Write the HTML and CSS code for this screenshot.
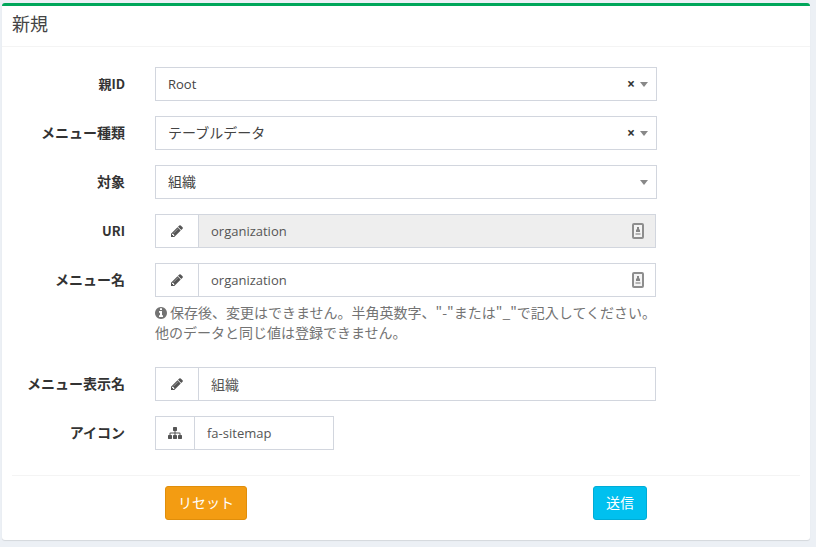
FILE: index.html
```html
<!DOCTYPE html>
<html lang="ja">
<head>
<meta charset="utf-8">
<meta name="viewport" content="width=device-width, initial-scale=1">
<title>新規</title>
<link rel="stylesheet" href="styles.css">
</head>
<body>
<svg class="sprite" aria-hidden="true">
  <symbol id="pencil" viewBox="0 0 1536 1792"><path d="M363 1536l91-91-235-235-91 91v107h128v128h107zM886 620q0-12-12-12-10 0-14 4l-545 545q-5 5-5 14 0 12 12 12 10 0 14-4l545-545q5-5 5-14zM832 416l416 416-832 832H0v-416zM1515 512q0 53-37 90l-166 166-416-416 166-165q36-38 90-38 53 0 91 38l235 234q37 39 37 91z"/></symbol>
  <symbol id="sitemap" viewBox="0 0 1792 1792"><path d="M1792 1248v320q0 40-28 68t-68 28h-320q-40 0-68-28t-28-68v-320q0-40 28-68t68-28h96V960H960v192h96q40 0 68 28t28 68v320q0 40-28 68t-68 28H736q-40 0-68-28t-28-68v-320q0-40 28-68t68-28h96V960H320v192h96q40 0 68 28t28 68v320q0 40-28 68t-68 28H96q-40 0-68-28t-28-68v-320q0-40 28-68t68-28h96V960q0-52 38-90t90-38h512V640h-96q-40 0-68-28t-28-68V224q0-40 28-68t68-28h320q40 0 68 28t28 68v320q0 40-28 68t-68 28h-96v192h512q52 0 90 38t38 90v192h96q40 0 68 28t28 68z"/></symbol>
  <symbol id="info" viewBox="0 0 1536 1792"><path d="M1024 1376v-160q0-14-9-23t-23-9h-96V672q0-14-9-23t-23-9H544q-14 0-23 9t-9 23v160q0 14 9 23t23 9h96v320h-96q-14 0-23 9t-9 23v160q0 14 9 23t23 9h448q14 0 23-9t9-23zM896 480V320q0-14-9-23t-23-9H672q-14 0-23 9t-9 23v160q0 14 9 23t23 9h192q14 0 23-9t9-23zM1536 896q0 209-103 385.500T1153.500 1561 768 1664t-385.500-103T103 1281.500 0 896t103-385.500T382.500 231 768 128t385.500 103T1433 510.500 1536 896z"/></symbol>
  <symbol id="autofill" viewBox="0 0 12 16"><rect x="1" y="1" width="10" height="14" rx="1" fill="#f4f4f4" stroke="#8e8e8e" stroke-width="2"/><path d="M5 4h2v2l1 1v2H4V7l1-1z" fill="#868686"/><path d="M3.500 10h5v2h-5z" fill="#b4b4b4"/></symbol>
</svg>
<main class="box">
  <header class="box-header"><h1>新規</h1></header>
  <form>
    <div class="fields">
      <div class="row">
        <label class="latin" for="parent">親ID</label>
        <div class="select"><select id="parent"><option>Root</option></select><button class="clear" type="button" aria-label="クリア">×</button></div>
      </div>
      <div class="row">
        <label for="type">メニュー種類</label>
        <div class="select"><select id="type"><option>テーブルデータ</option></select><button class="clear" type="button" aria-label="クリア">×</button></div>
      </div>
      <div class="row">
        <label for="target">対象</label>
        <div class="select"><select id="target"><option>組織</option></select></div>
      </div>
      <div class="row">
        <label class="latin" for="uri">URI</label>
        <div class="group"><span class="addon"><svg class="icon pencil"><use href="#pencil"/></svg></span><input id="uri" type="text" value="organization" readonly><svg class="autofill"><use href="#autofill"/></svg></div>
      </div>
      <div class="row">
        <label for="name">メニュー名</label>
        <div>
          <div class="group"><span class="addon"><svg class="icon pencil"><use href="#pencil"/></svg></span><input id="name" type="text" value="organization" aria-describedby="name-help"><svg class="autofill"><use href="#autofill"/></svg></div>
          <p class="help" id="name-help"><svg class="icon info"><use href="#info"/></svg>保存後、変更はできません。半角英数字、"-"または"_"で記入してください。<br>他のデータと同じ値は登録できません。</p>
        </div>
      </div>
      <div class="row">
        <label for="display">メニュー表示名</label>
        <div class="group"><span class="addon"><svg class="icon pencil"><use href="#pencil"/></svg></span><input id="display" type="text" value="組織"></div>
      </div>
      <div class="row">
        <label for="icon">アイコン</label>
        <div class="group short"><span class="addon"><svg class="icon"><use href="#sitemap"/></svg></span><input id="icon" type="text" value="fa-sitemap"></div>
      </div>
    </div>
    <footer class="box-footer">
      <div class="actions">
        <button class="btn warning" type="reset">リセット</button>
        <button class="btn primary" type="submit">送信</button>
      </div>
    </footer>
  </form>
</main>
</body>
</html>
```
FILE: styles.css
```css
* { box-sizing: border-box; }
body {
  margin: 0;
  padding: 3px 6px 6px 2px;
  background: #ecf0f5;
  color: #333;
  font: 14px/20px "Open Sans", "Noto Sans CJK JP", sans-serif;
}
.sprite { display: none; }
.box {
  background: #fff;
  border-top: 3px solid #00a65a;
  border-radius: 3px;
  box-shadow: 0 1px 1px rgba(0, 0, 0, .1);
}
.box-header {
  padding: 8px 10px 12px;
  border-bottom: 1px solid #f4f4f4;
}
h1 {
  margin: 0;
  color: #444;
  font-size: 18px;
  font-weight: 400;
  line-height: 20px;
}
.fields {
  display: grid;
  gap: 15px;
  padding: 20px 5px 25px;
}
.row, .actions {
  display: grid;
  grid-template-columns: 2fr 8fr 2fr;
}
.row > * { min-width: 0; margin: 0 15px; }
.row > label {
  padding-top: 7px;
  text-align: right;
  font-weight: 700;
  font-size: 14px;
  white-space: nowrap;
}
.row > .latin { font-family: "Noto Sans CJK JP", sans-serif; font-size: 13px; }
input, select, button { font: inherit; }
input, select { font-size: 13px; }
#type, #target, #display { font-size: 14px; }
#display { font-family: "Noto Sans CJK JP", sans-serif; }
select, input {
  width: 100%;
  height: 34px;
  padding: 0 12px;
  border: 1px solid #d2d6de;
  border-radius: 0;
  background: #fff;
  color: #444;
  appearance: none;
}
input { color: #555; }
input[readonly] { background: #eee; }
.select, .group { position: relative; }
.select::after {
  content: "";
  position: absolute;
  top: 15px;
  right: 9px;
  border: 4px solid transparent;
  border-top: 5px solid #888;
  border-bottom: 0;
  pointer-events: none;
}
.clear {
  position: absolute;
  top: 7px;
  right: 22px;
  padding: 0;
  border: 0;
  background: none;
  color: #333;
  font-weight: 700;
  line-height: 20px;
}
.group { display: flex; height: 34px; padding-right: 1px; }
.group input { flex: 1; min-width: 0; }
.addon {
  display: flex;
  align-items: center;
  justify-content: center;
  width: 43px;
  border: 1px solid #d2d6de;
  border-right: 0;
  color: #555;
}
.short { width: 180px; }
.short .addon { width: 39px; }
.icon { width: 14px; height: 14px; fill: currentColor; }
.pencil, .info { width: 12px; }
.autofill {
  position: absolute;
  top: 9px;
  right: 13px;
  width: 12px;
  height: 16px;
}
.help {
  margin: 5px 0 10px;
  color: #737373;
  font-family: "Noto Sans CJK JP", sans-serif;
}
.info { margin-right: 3px; vertical-align: -2px; }
.box-footer {
  margin: 0 10px;
  padding: 10px 0 20px;
  border-top: 1px solid #f4f4f4;
}
.actions {
  grid-template-columns: 2fr 4fr 4fr 2fr;
  margin: 0 -5px;
}
.actions::before { content: ""; }
.btn {
  height: 34px;
  margin: 0 25px;
  padding: 0 12px;
  border: 1px solid;
  border-radius: 3px;
  color: #fff;
}
.warning { justify-self: start; background: #f39c12; border-color: #e08e0b; }
.primary { justify-self: end; background: #00c0ef; border-color: #00acd6; }
```
